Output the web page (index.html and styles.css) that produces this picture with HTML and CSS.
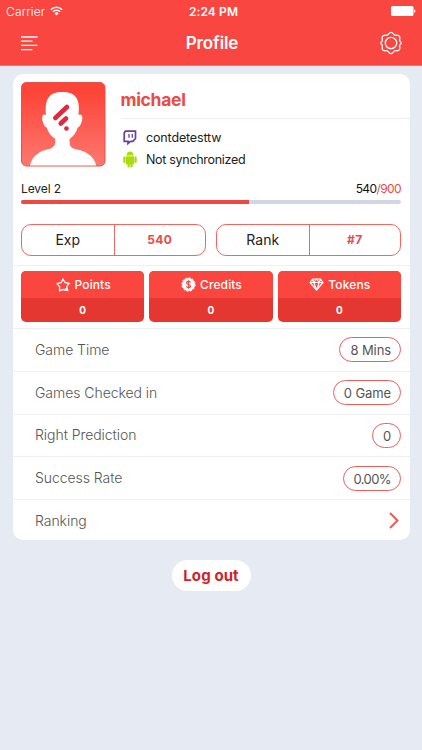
FILE: index.html
```html
<!DOCTYPE html>
<html lang="en">
<head>
<meta charset="utf-8">
<title>Profile</title>
<link rel="stylesheet" href="styles.css">
</head>
<body>
<header class="top">
  <div class="status">
    <div class="carrier"><span>Carrier</span>
      <svg width="13" height="10" viewBox="0 0 13 10" fill="none" stroke="#fff" stroke-width="1.5"><path d="M.8 3.7a8.1 8.1 0 0 1 11.4 0M2.9 5.8a5.1 5.1 0 0 1 7.2 0"/><path d="M6.500 9.500 4.400 7.300a2.900 2.900 0 0 1 4.200 0z" fill="#fff" stroke="none"/></svg>
    </div>
    <span class="time">2:24 PM</span>
    <svg class="battery" width="25" height="10" viewBox="0 0 25 10" fill="#fff"><rect width="22.5" height="10" rx="1.5"/><path d="M23.2 3.2c1.7.4 1.7 3.2 0 3.6z"/></svg>
  </div>
  <nav class="nav">
    <svg width="17" height="15" viewBox="0 0 17 15" stroke="#fff" stroke-width="1.3"><path d="M0 1h16.5M0 5.2h11.5M0 9.4h16.5M0 13.6h11.5"/></svg>
    <h1>Profile</h1>
    <svg width="24" height="24" viewBox="0 0 24 24" fill="none" stroke="#fff" stroke-width="1.300"><circle cx="12" cy="12" r="5.700"/><path d="M9.800 2.700Q12 .1 14.200 2.700Q15.200 4.400 17.200 4.300Q20.800 4 20.900 7Q20.300 8.800 20.900 10.300Q23.500 12 20.900 13.700Q20.300 15.200 20.900 17Q20.800 20 17.200 19.700Q15.200 19.600 14.200 21.300Q12 23.900 9.800 21.300Q8.800 19.600 6.800 19.700Q3.200 20 3.100 17Q3.700 15.200 3.100 13.700Q.5 12 3.100 10.300Q3.700 8.800 3.100 7Q3.200 4 6.800 4.300Q8.800 4.400 9.800 2.700Z"/></svg>
  </nav>
</header>
<main>
  <section class="card">
    <div class="intro">
      <svg class="avatar" width="85" height="85" viewBox="0 0 85 85">
        <defs><linearGradient id="bg" x2="0" y2="1"><stop offset=".1" stop-color="#fd4438"/><stop offset="1" stop-color="#fc7870"/></linearGradient></defs>
        <rect x=".5" y=".5" width="83.500" height="83.500" rx="5" fill="url(#bg)" stroke="#e8524c"/>
        <path fill="#fff" d="M9 83.500C11 73 20 68.500 28 67C33 65.500 34.500 63 34.300 57C29.500 54 27 50 25.700 45.500C22.500 45 20 35.500 21.700 33.500Q23 32 25 33C23.500 17 28 10 41.300 10S59.500 17 57.500 33Q59.500 32 60.800 33.500C62.500 35.500 60 45 56.700 45.500C55.500 50 53 54 48.600 57C48.300 63 49 65.500 54 67C63 68.500 73 73 75.200 83.500Z"/>
        <g stroke="#df293e" stroke-width="4.600" stroke-linecap="round"><path d="M34.300 36 46 25M39.700 41.500 45 36.500M45.400 46.500h.1"/></g>
      </svg>
      <div class="who">
        <h2>michael</h2>
        <div class="account"><svg width="14" height="15" viewBox="0 0 14 15" fill="none" stroke="#6441a5" stroke-width="1.700"><path d="M1.200 3 2.400 1.200H12.500V8.500L9.900 11.300H7.500L5 13.500V11.300H1.200Z"/><path stroke-width="1.300" d="M6 4v3.700M9.300 4v3.700"/></svg><span class="twitch">contdetesttw</span></div>
        <div class="account"><svg width="14" height="17" viewBox="0 0 14 17" fill="#a9dc0b"><path d="M3.500 4.500C3.500-1 10.500-1 10.500 4.500Z"/><path d="M3 5.200h8v7.600q0 .7-.7.700h-.8v2a1.100 1.100 0 0 1-2.200 0v-2h-.6v2a1.100 1.100 0 0 1-2.200 0v-2h-.8Q3 13.500 3 12.800Z"/><rect x=".3" y="5.500" width="2.300" height="6.500" rx="1.100"/><rect x="11.400" y="5.500" width="2.300" height="6.500" rx="1.100"/></svg><span class="sync">Not synchronized</span></div>
      </div>
    </div>
    <div class="level"><span class="lv">Level 2</span><span class="xp">540<em>/900</em></span></div>
    <div class="bar"><div class="fill"></div></div>
    <div class="stats">
      <div class="stat"><span>Exp</span><b>540</b></div>
      <div class="stat"><span>Rank</span><b>#7</b></div>
    </div>
    <div class="tiles">
      <div class="tile"><div class="tile-name"><svg width="15" height="14" viewBox="0 0 15 14" fill="none" stroke="#fff" stroke-width="1.300" stroke-linejoin="round"><path d="M7 1 9 4.500 13.300 5.300 10.700 8.400 11.800 12.700 7.300 11.300 3.500 12.800 3.700 8.800 1 5.600 5.200 4.600Z"/><path d="M6.500 12 11 9.500 12 13Z" fill="#fff" stroke="none"/></svg><span>Points</span></div><b>0</b></div>
      <div class="tile"><div class="tile-name"><svg width="15" height="15" viewBox="0 0 15 15"><circle cx="7.500" cy="7.500" r="6.500" fill="#fff"/><circle cx="7.500" cy="7.500" r="6.700" fill="none" stroke="#fff" stroke-width="1" stroke-dasharray="2 1.500"/><path d="M9.500 5.500C9 4 5.600 4 5.600 5.900S9.500 7.300 9.500 9.200 5.900 11 5.400 9.300M7.500 3.200v8.600" fill="none" stroke="#f94640" stroke-width="1.200"/></svg><span>Credits</span></div><b>0</b></div>
      <div class="tile"><div class="tile-name"><svg width="15" height="13" viewBox="0 0 15 13" fill="none" stroke="#fff" stroke-width="1.200" stroke-linejoin="round"><path d="M3.500 1h8L14 4.500 7.500 12 1 4.500ZM1 4.500h13M3.500 1l1.300 3.500L7.500 12l2.700-7.500L11.500 1M4.800 4.500 7.500 1l2.700 3.500"/></svg><span>Tokens</span></div><b>0</b></div>
    </div>
    <div class="row"><span>Game Time</span><span class="pill">8 Mins</span></div>
    <div class="row"><span>Games Checked in</span><span class="pill">0 Game</span></div>
    <div class="row"><span>Right Prediction</span><span class="pill">0</span></div>
    <div class="row"><span>Success Rate</span><span class="pill percent">0.00%</span></div>
    <div class="row"><span>Ranking</span><svg class="chevron" width="10" height="17" viewBox="0 0 10 17" fill="none" stroke="#e95b54" stroke-width="1.900"><path d="m1 1 7.500 7.500L1 16"/></svg></div>
  </section>
  <button class="logout">Log out</button>
</main>
</body>
</html>
```
FILE: styles.css
```css
* { box-sizing: border-box; }
body { margin: 0; height: 750px; background: #e6eaf2; color: #222; font-family: Inter, "Liberation Sans", sans-serif; }
h1, h2 { margin: 0; }
svg { display: block; flex: none; }
.top { height: 66px; background: #f94640; color: #fff; border-bottom: 1px solid #f27370; }
.status { height: 22px; padding: 0 6px; display: grid; grid-template-columns: 1fr auto 1fr; align-items: center; font-size: 12px; }
.carrier { display: flex; align-items: center; gap: 5px; letter-spacing: .15px; font-weight: 350; }
.time { font-weight: 600; letter-spacing: .1px; margin-left: 5px; }
.battery { justify-self: end; }
.nav { height: 42px; padding: 0 19px 0 21px; display: grid; grid-template-columns: 1fr auto 1fr; align-items: center; }
.nav h1 { font-size: 17px; line-height: 20px; font-weight: 600; letter-spacing: -.1px; }
.nav svg:last-child { justify-self: end; }
main { padding: 8px 12.500px; display: flex; flex-direction: column; align-items: center; }
.card { width: 100%; height: 466px; background: #fff; border-radius: 10px; }
.intro { display: flex; gap: 15px; padding: 8px 0 0 8px; height: 101px; }
.who { flex: 1; }
.who h2 { height: 37px; border-bottom: 1px solid #eceef8; font-size: 17.500px; line-height: 36px; font-weight: 700; letter-spacing: -.3px; color: #eb4a45; margin-bottom: 7.500px; }
.account { display: flex; align-items: center; gap: 9.500px; height: 22px; padding-left: 2px; }
.twitch { font-size: 12.500px; letter-spacing: -.15px; }
.sync { font-size: 12.500px; letter-spacing: -.3px; }
.level { display: flex; justify-content: space-between; height: 25px; padding: 5px 8.500px 0; font-size: 12px; line-height: 18px; }
.lv { letter-spacing: -.1px; }
.xp { color: #111; letter-spacing: -.6px; }
.xp em { font-style: normal; color: #eb4a45; }
.bar { height: 4px; margin: 0 8.500px; border-radius: 2px; background: #d1d6e7; overflow: hidden; }
.fill { width: 60%; height: 100%; background: #ee4842; }
.stats { display: flex; gap: 10px; margin: 20px 8.500px 0; }
.stat { flex: 1; height: 32px; display: grid; grid-template-columns: 91.500px 1fr; border: 1px solid #ee6762; border-radius: 10px; text-align: center; line-height: 30px; font-size: 14px; }
.stat b { border-left: 1px solid #ee6762; color: #eb4a45; font-size: 12px; font-weight: 700; letter-spacing: .3px; }
.tiles { display: flex; gap: 5px; margin-top: 9px; padding: 5px 8.500px 6px; border: solid #edf0f7; border-width: 1px 0; height: 64px; }
.tile { flex: 1; height: 51px; border-radius: 5px; overflow: hidden; background: #e53732; color: #fff; text-align: center; }
.tile-name { height: 27px; background: #fb4640; display: flex; align-items: center; justify-content: center; gap: 4px; padding-left: 1px; font-size: 12px; font-weight: 500; letter-spacing: .1px; }
.tile b { display: block; font-size: 10px; line-height: 24px; font-weight: 700; }
.row { height: 42.800px; display: flex; align-items: center; justify-content: space-between; padding: 0 8.500px 0 22.500px; border-bottom: 1px solid #eef0f7; font-size: 14px; line-height: 18px; letter-spacing: -.05px; font-weight: 300; color: #555; }
.row:last-child { border: 0; height: 41px; }
.pill { height: 25px; border: 1px solid #e8615c; border-radius: 13px; padding: 0 9px 0 10px; font-size: 13px; line-height: 24px; font-weight: 400; letter-spacing: -.1px; color: #555; }
.percent { letter-spacing: -.6px; }
.chevron { margin-right: 2.500px; }
.logout { margin-top: 20px; width: 79px; height: 31px; padding: 0; border: 0; border-radius: 16px; background: #fff; color: #cc2427; font: 700 15px/31px Inter, sans-serif; letter-spacing: .1px; }
```
